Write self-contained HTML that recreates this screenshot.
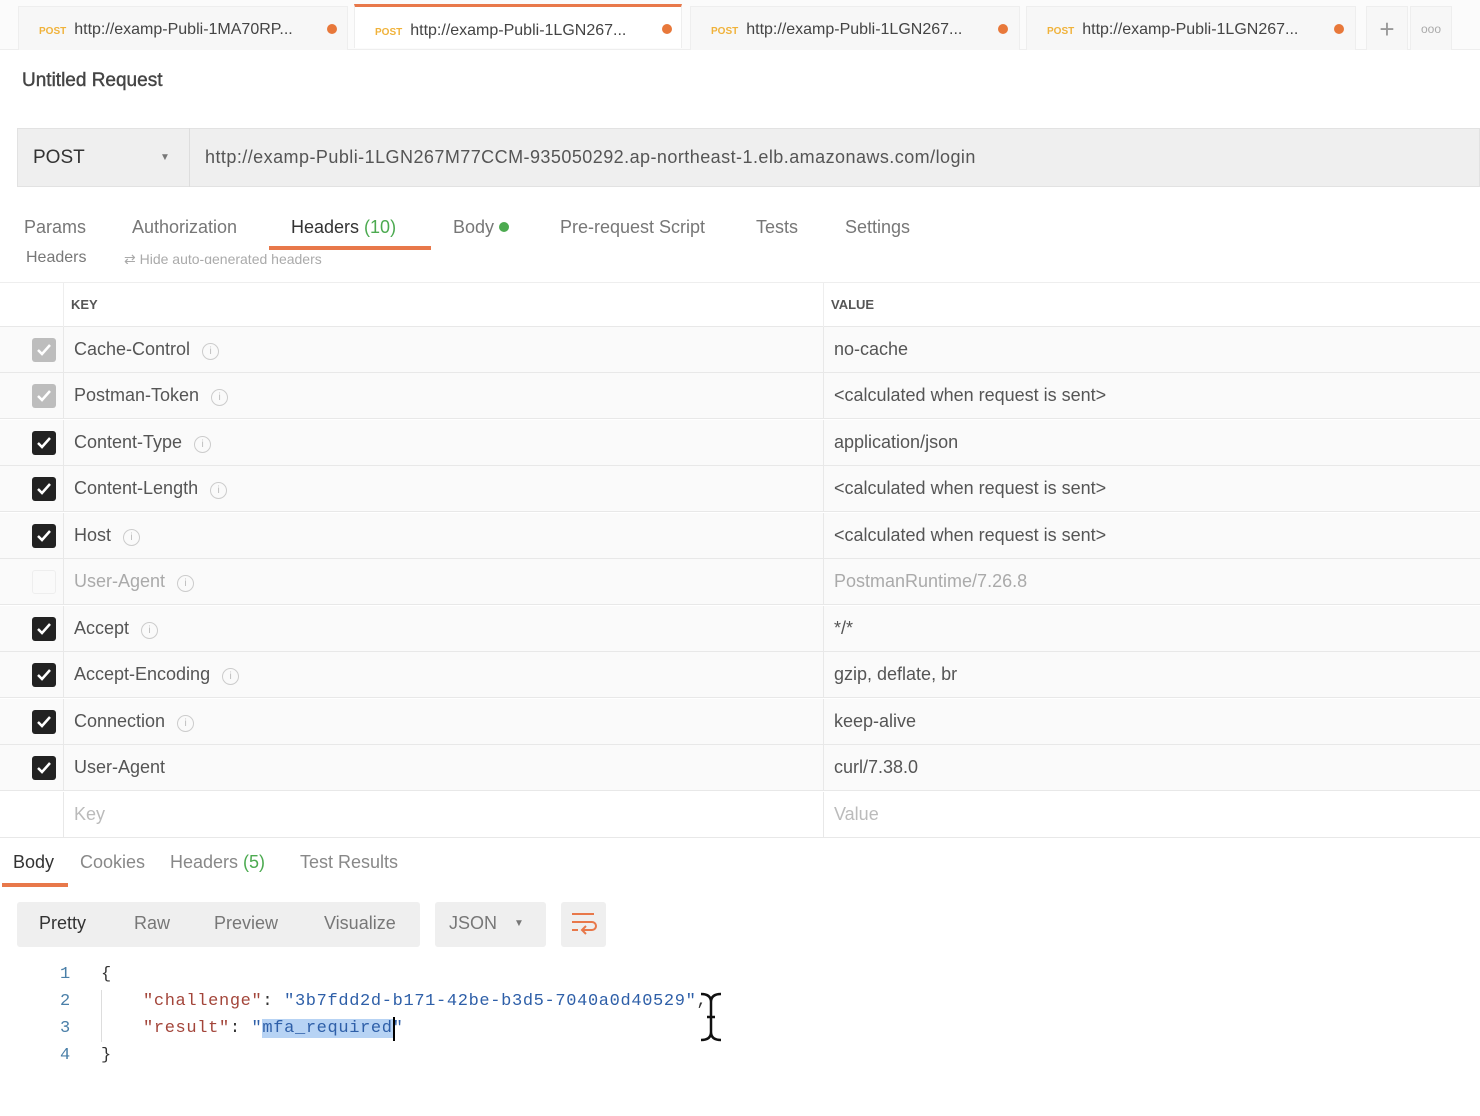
<!DOCTYPE html>
<html><head><meta charset="utf-8"><style>
*{box-sizing:border-box;margin:0;padding:0}
body{width:1480px;height:1116px;overflow:hidden;background:#fff;font-family:"Liberation Sans",sans-serif;color:#505050;position:relative}
.a{position:absolute;white-space:nowrap}
.tab{position:absolute;top:6px;height:44px;background:#f7f7f7;border:1px solid #eee;border-bottom:none;font-size:16px;color:#444;line-height:46px;padding-left:20px}
.tab b{font-size:10px;color:#f0b23a;font-weight:bold;margin-right:8px;letter-spacing:0}
.dot{position:absolute;top:19px;width:10px;height:10px;border-radius:50%;background:#e8783a}
.row{position:absolute;left:0;width:1480px;height:46px;background:#fafafa;border-bottom:1px solid #e8e8e8}
.row .k{position:absolute;left:74px;top:12px;font-size:18px;color:#555}
.row .v{position:absolute;left:834px;top:12px;font-size:18px;color:#555}
.row .div{position:absolute;left:823px;top:0;bottom:0;width:1px;background:#e8e8e8}
.row .div2{position:absolute;left:63px;top:0;bottom:0;width:1px;background:#e8e8e8}
.cb{position:absolute;left:32px;top:11px;width:24px;height:24px;border-radius:3px;background:#222}
.cb.g{background:#bdbdbd}
.cb.e{background:#fafafa;border:1px solid #eee}
.cb svg{position:absolute;left:3px;top:4px}
.i{display:inline-block;width:17px;height:17px;border:1px solid #ccc;border-radius:50%;margin-left:12px;vertical-align:1px;font-size:10px;color:#bbb;text-align:center;line-height:15px}
.mono{font-family:"Liberation Mono",monospace;font-size:17px;letter-spacing:0.65px}
</style></head><body>
<div class="a" style="left:0;top:0;width:1480px;height:50px;background:#fbfbfb;border-bottom:1px solid #eee"></div>
<div class="tab" style="left:18px;width:330px"><b>POST</b>http://examp-Publi-1MA70RP...</div><div class="dot" style="left:327px;top:24px"></div>
<div class="tab" style="left:354px;width:328px;background:#fff;border-top:3px solid #e8784a;top:4px;line-height:48px"><b>POST</b>http://examp-Publi-1LGN267...</div><div class="dot" style="left:662px;top:24px"></div>
<div class="tab" style="left:690px;width:330px"><b>POST</b>http://examp-Publi-1LGN267...</div><div class="dot" style="left:998px;top:24px"></div>
<div class="tab" style="left:1026px;width:330px"><b>POST</b>http://examp-Publi-1LGN267...</div><div class="dot" style="left:1334px;top:24px"></div>
<div class="tab" style="left:1366px;width:42px;padding:0;text-align:center;font-size:26px;color:#999;line-height:44px">+</div>
<div class="tab" style="left:1410px;width:42px;padding:0;text-align:center;font-size:12px;color:#aaa;line-height:44px">ooo</div>

<div class="a" style="left:22px;top:70px;font-size:19px;color:#444;-webkit-text-stroke:0.4px #444">Untitled Request</div>

<div class="a" style="left:17px;top:128px;width:1463px;height:59px;background:#efefef;border:1px solid #e2e2e2"></div>
<div class="a" style="left:189px;top:128px;width:1px;height:59px;background:#ddd"></div>
<div class="a" style="left:33px;top:147px;font-size:19px;color:#333">POST</div>
<div class="a" style="left:160px;top:152px;font-size:10px;color:#777">▼</div>
<div class="a" style="left:205px;top:147px;font-size:18px;color:#555;letter-spacing:0.45px">http://examp-Publi-1LGN267M77CCM-935050292.ap-northeast-1.elb.amazonaws.com/login</div>

<div class="a" style="left:24px;top:217px;font-size:18px;color:#777">Params</div>
<div class="a" style="left:132px;top:217px;font-size:18px;color:#777">Authorization</div>
<div class="a" style="left:291px;top:217px;font-size:18px;color:#333">Headers <span style="color:#4caa50">(10)</span></div>
<div class="a" style="left:269px;top:246px;width:162px;height:4px;background:#e8784a"></div>
<div class="a" style="left:453px;top:217px;font-size:18px;color:#777">Body <span style="display:inline-block;width:10px;height:10px;border-radius:50%;background:#4caa50;vertical-align:1px"></span></div>
<div class="a" style="left:560px;top:217px;font-size:18px;color:#777">Pre-request Script</div>
<div class="a" style="left:756px;top:217px;font-size:18px;color:#777">Tests</div>
<div class="a" style="left:845px;top:217px;font-size:18px;color:#777">Settings</div>
<div class="a" style="left:26px;top:248px;font-size:16px;color:#777;height:14px;overflow:hidden;line-height:20px">Headers</div>
<div class="a" style="left:124px;top:250px;font-size:14px;color:#aaa;height:14px;overflow:hidden;line-height:18px">⇄ Hide auto-generated headers</div>

<div class="a" style="left:0;top:282px;width:1480px;height:45px;border-top:1px solid #eee;border-bottom:1px solid #e8e8e8"></div>
<div class="a" style="left:63px;top:282px;width:1px;height:45px;background:#eee"></div>
<div class="a" style="left:823px;top:282px;width:1px;height:45px;background:#eee"></div>
<div class="a" style="left:71px;top:297px;font-size:13px;font-weight:bold;color:#555">KEY</div>
<div class="a" style="left:831px;top:297px;font-size:13px;font-weight:bold;color:#555">VALUE</div>

<div class="row" style="top:327px"><div class="div"></div><div class="div2"></div><div class="cb g"><svg width="18" height="16"><path d="M3 8l4 4 8-9" stroke="#fff" stroke-width="2.5" fill="none"/></svg></div><div class="k">Cache-Control<span class="i">i</span></div><div class="v">no-cache</div></div>
<div class="row" style="top:373px"><div class="div"></div><div class="div2"></div><div class="cb g"><svg width="18" height="16"><path d="M3 8l4 4 8-9" stroke="#fff" stroke-width="2.5" fill="none"/></svg></div><div class="k">Postman-Token<span class="i">i</span></div><div class="v">&lt;calculated when request is sent&gt;</div></div>
<div class="row" style="top:420px"><div class="div"></div><div class="div2"></div><div class="cb"><svg width="18" height="16"><path d="M3 8l4 4 8-9" stroke="#fff" stroke-width="2.5" fill="none"/></svg></div><div class="k">Content-Type<span class="i">i</span></div><div class="v">application/json</div></div>
<div class="row" style="top:466px"><div class="div"></div><div class="div2"></div><div class="cb"><svg width="18" height="16"><path d="M3 8l4 4 8-9" stroke="#fff" stroke-width="2.5" fill="none"/></svg></div><div class="k">Content-Length<span class="i">i</span></div><div class="v">&lt;calculated when request is sent&gt;</div></div>
<div class="row" style="top:513px"><div class="div"></div><div class="div2"></div><div class="cb"><svg width="18" height="16"><path d="M3 8l4 4 8-9" stroke="#fff" stroke-width="2.5" fill="none"/></svg></div><div class="k">Host<span class="i">i</span></div><div class="v">&lt;calculated when request is sent&gt;</div></div>
<div class="row" style="top:559px"><div class="div"></div><div class="div2"></div><div class="cb e"></div><div class="k" style="color:#aaa">User-Agent<span class="i">i</span></div><div class="v" style="color:#aaa">PostmanRuntime/7.26.8</div></div>
<div class="row" style="top:606px"><div class="div"></div><div class="div2"></div><div class="cb"><svg width="18" height="16"><path d="M3 8l4 4 8-9" stroke="#fff" stroke-width="2.5" fill="none"/></svg></div><div class="k">Accept<span class="i">i</span></div><div class="v">*/*</div></div>
<div class="row" style="top:652px"><div class="div"></div><div class="div2"></div><div class="cb"><svg width="18" height="16"><path d="M3 8l4 4 8-9" stroke="#fff" stroke-width="2.5" fill="none"/></svg></div><div class="k">Accept-Encoding<span class="i">i</span></div><div class="v">gzip, deflate, br</div></div>
<div class="row" style="top:699px"><div class="div"></div><div class="div2"></div><div class="cb"><svg width="18" height="16"><path d="M3 8l4 4 8-9" stroke="#fff" stroke-width="2.5" fill="none"/></svg></div><div class="k">Connection<span class="i">i</span></div><div class="v">keep-alive</div></div>
<div class="row" style="top:745px"><div class="div"></div><div class="div2"></div><div class="cb"><svg width="18" height="16"><path d="M3 8l4 4 8-9" stroke="#fff" stroke-width="2.5" fill="none"/></svg></div><div class="k">User-Agent</div><div class="v">curl/7.38.0</div></div>
<div class="row" style="top:792px;background:#fff"><div class="div"></div><div class="div2"></div><div class="k" style="color:#bbb">Key</div><div class="v" style="color:#bbb">Value</div></div>

<div class="a" style="left:13px;top:852px;font-size:18px;color:#333">Body</div>
<div class="a" style="left:2px;top:883px;width:66px;height:4px;background:#e8784a"></div>
<div class="a" style="left:80px;top:852px;font-size:18px;color:#888">Cookies</div>
<div class="a" style="left:170px;top:852px;font-size:18px;color:#888">Headers <span style="color:#4caa50">(5)</span></div>
<div class="a" style="left:300px;top:852px;font-size:18px;color:#888">Test Results</div>

<div class="a" style="left:17px;top:902px;width:403px;height:45px;background:#efefef;border-radius:3px"></div>
<div class="a" style="left:39px;top:913px;font-size:18px;color:#333">Pretty</div>
<div class="a" style="left:134px;top:913px;font-size:18px;color:#777">Raw</div>
<div class="a" style="left:214px;top:913px;font-size:18px;color:#777">Preview</div>
<div class="a" style="left:324px;top:913px;font-size:18px;color:#777">Visualize</div>
<div class="a" style="left:435px;top:902px;width:111px;height:45px;background:#efefef;border-radius:3px"></div>
<div class="a" style="left:449px;top:913px;font-size:18px;color:#777">JSON</div>
<div class="a" style="left:514px;top:918px;font-size:10px;color:#777">▼</div>
<div class="a" style="left:561px;top:902px;width:45px;height:45px;background:#efefef;border-radius:3px"></div>
<svg class="a" style="left:569px;top:910px" width="30" height="30"><path d="M3 4h22M3 12h20a4 4 0 0 1 0 8h-9M17 16l-4 4 4 4M3 20h6" stroke="#e8784a" stroke-width="2" fill="none"/></svg>

<div class="a mono" style="left:60px;top:965px;color:#4a7fa8">1</div>
<div class="a mono" style="left:60px;top:992px;color:#4a7fa8">2</div>
<div class="a mono" style="left:60px;top:1019px;color:#4a7fa8">3</div>
<div class="a mono" style="left:60px;top:1046px;color:#4a7fa8">4</div>
<div class="a" style="left:101px;top:990px;width:1px;height:52px;background:#ddd"></div>
<div class="a mono" style="left:101px;top:965px;color:#333">{</div>
<div class="a mono" style="left:143px;top:992px;color:#333"><span style="color:#a3453a">"challenge"</span>: <span style="color:#2e5fa8">"3b7fdd2d-b171-42be-b3d5-7040a0d40529"</span>,</div>
<div class="a mono" style="left:143px;top:1019px;color:#333"><span style="color:#a3453a">"result"</span>: <span style="color:#2e5fa8">"<span style="background:#b7d3f4">mfa_required</span>"</span></div>
<div class="a" style="left:393px;top:1017px;width:2px;height:24px;background:#000"></div>
<div class="a mono" style="left:101px;top:1046px;color:#333">}</div>
<svg class="a" style="left:698px;top:992px" width="26" height="50"><path d="M3 2q10 0 10 8v30q0 8 10 8M23 2q-10 0-10 8v30q0 8-10 8M9 25h8" stroke="#111" stroke-width="2.5" fill="none"/></svg>
</body></html>
